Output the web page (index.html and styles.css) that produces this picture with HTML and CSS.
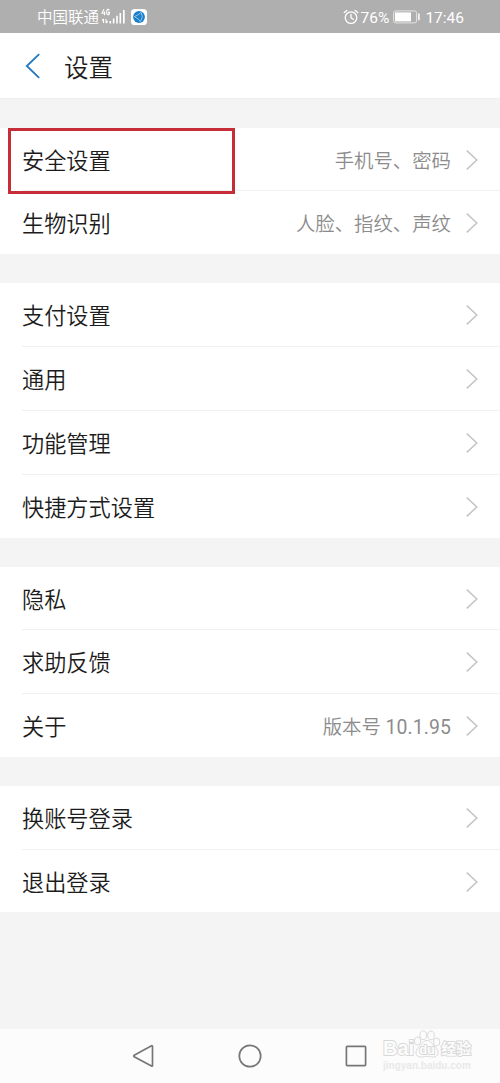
FILE: index.html
```html
<!DOCTYPE html>
<html lang="zh-CN">
<head>
    <meta charset="UTF-8">
    <meta name="viewport" content="width=device-width, initial-scale=1.0">
    <title>设置</title>
    <link rel="stylesheet" href="styles.css">
</head>
<body>
    <svg class="defs" width="0" height="0">
        <symbol id="chevron" viewBox="0 0 12 20">
            <path d="M0.8 0.6 L10.8 10 L0.8 19.4" fill="none" stroke="#c6c6c6" stroke-width="1.6"/>
        </symbol>
    </svg>

    <!-- 状态栏 -->
    <div class="status-bar">
        <span class="carrier">中国联通</span>
        <svg class="signal" width="26" height="18" viewBox="0 0 26 18">
            <g fill="none" stroke="#fff" stroke-width="1.1">
                <path d="M3 1.2 L1 5.2 H4.4 M3.5 3.4 V7.2"/>
                <path d="M8.4 2.4 Q8 1.4 7 1.4 Q5.7 1.4 5.7 4 Q5.7 6.7 7 6.7 Q8.5 6.7 8.5 4.4 H7"/>
                <path d="M2.5 11 V15 M1 12.5 L2.5 10.8 M5 11 V15 M5 15 L6.8 13.2"/>
            </g>
            <path d="M8.5 13h1.6v2.4H8.5zM11.8 10.5h1.6v4.9h-1.6zM15.2 7.8h1.6v7.6h-1.6zM18.5 5h1.6v10.4h-1.6zM22 2h1.7v13.4H22z" fill="#fff"/>
        </svg>
        <svg class="app-badge" width="16" height="16" viewBox="0 0 16 16">
            <rect width="16" height="16" rx="3.6" fill="#fff"/>
            <circle cx="8" cy="8" r="5.9" fill="#1c7fc8"/>
            <path d="M3 7.8 Q7 6.4 10.5 3.2 M4 8 Q7.5 9.4 9.7 13 M10.3 4 Q12.6 7.6 9.8 12" fill="none" stroke="#a8d8f5" stroke-width="0.8"/>
        </svg>
        <div class="status-right">
            <svg class="alarm" width="16" height="16" viewBox="0 0 16 16">
                <g fill="none" stroke="#fff" stroke-width="1.3" stroke-linecap="round">
                    <circle cx="8" cy="8.6" r="5.8"/>
                    <path d="M8 5.4 V8.8 L10.3 10.3 M1.2 3.6 L3.9 1.4 M14.8 3.6 L12.1 1.4"/>
                </g>
            </svg>
            <span class="percent">76%</span>
            <svg class="battery" width="28" height="14" viewBox="0 0 28 14">
                <rect x="0.6" y="0.9" width="23" height="12" rx="2" fill="none" stroke="#e4e4e4" stroke-width="1"/>
                <rect x="2" y="2.4" width="16" height="9" fill="#fff"/>
                <path d="M25.9 3.5 V10.3" stroke="#fff" stroke-width="1.5"/>
            </svg>
            <span class="time">17:46</span>
        </div>
    </div>

    <!-- 标题 -->
    <header class="header">
        <svg class="back" width="16" height="26" viewBox="0 0 16 26">
            <path d="M14.2 1.2 L1.8 13 L14.2 24.8" fill="none" stroke="#2277bf" stroke-width="1.8"/>
        </svg>
        <h1>设置</h1>
    </header>

    <!-- 设置列表 -->
    <main class="settings">
        <section class="group short">
            <div class="row selected">
                <span class="label">安全设置</span>
                <span class="value">手机号、密码</span>
                <svg class="arrow"><use href="#chevron"/></svg>
            </div>
            <div class="row">
                <span class="label">生物识别</span>
                <span class="value">人脸、指纹、声纹</span>
                <svg class="arrow"><use href="#chevron"/></svg>
            </div>
        </section>

        <section class="group">
            <div class="row">
                <span class="label">支付设置</span>
                <svg class="arrow"><use href="#chevron"/></svg>
            </div>
            <div class="row">
                <span class="label">通用</span>
                <svg class="arrow"><use href="#chevron"/></svg>
            </div>
            <div class="row">
                <span class="label">功能管理</span>
                <svg class="arrow"><use href="#chevron"/></svg>
            </div>
            <div class="row">
                <span class="label">快捷方式设置</span>
                <svg class="arrow"><use href="#chevron"/></svg>
            </div>
        </section>

        <section class="group short">
            <div class="row">
                <span class="label">隐私</span>
                <svg class="arrow"><use href="#chevron"/></svg>
            </div>
            <div class="row">
                <span class="label">求助反馈</span>
                <svg class="arrow"><use href="#chevron"/></svg>
            </div>
            <div class="row">
                <span class="label">关于</span>
                <span class="value">版本号 <span class="version">10.1.95</span></span>
                <svg class="arrow"><use href="#chevron"/></svg>
            </div>
        </section>

        <section class="group">
            <div class="row">
                <span class="label">换账号登录</span>
                <svg class="arrow"><use href="#chevron"/></svg>
            </div>
            <div class="row last">
                <span class="label">退出登录</span>
                <svg class="arrow"><use href="#chevron"/></svg>
            </div>
        </section>
    </main>

    <!-- 导航键 -->
    <nav class="nav-bar">
        <svg width="24" height="24" viewBox="0 0 24 24"><path d="M19.5 1.8 Q20.5 1.4 20.5 2.6 V21.4 Q20.5 22.6 19.5 22.1 L2.2 12.7 Q1.2 12 2.2 11.3 Z"/></svg>
        <svg width="24" height="24" viewBox="0 0 24 24"><circle cx="12" cy="12" r="10.7"/></svg>
        <svg width="24" height="24" viewBox="0 0 24 24"><rect x="2.4" y="2.4" width="19.2" height="19.2" rx="0.8"/></svg>
        <div class="watermark">
            <div class="brand">
                <span class="bai">Bai</span>
                <span class="paw">
                    <svg width="28" height="28" viewBox="0 0 28 28">
                        <ellipse cx="4.6" cy="11" rx="3.2" ry="4"/>
                        <ellipse cx="10.2" cy="5.2" rx="3.3" ry="4.4"/>
                        <ellipse cx="18" cy="5.4" rx="3.3" ry="4.4"/>
                        <ellipse cx="23.6" cy="12" rx="3.2" ry="4"/>
                        <path d="M14 10.5 C18 10.5 18.5 14 22 16.8 C27 21 25.5 27 20.5 27 C17 27 16 26.3 14 26.3 C12 26.3 11 27 7.5 27 C2.5 27 1 21 6 16.8 C9.5 14 10 10.5 14 10.5 Z"/>
                    </svg>
                    <b>du</b>
                </span>
                <span class="jy">经验</span>
            </div>
            <div class="site">jingyan.baidu.com</div>
        </div>
    </nav>
</body>
</html>
```
FILE: styles.css
```css
* {
    box-sizing: border-box;
}

body {
    margin: 0;
    width: 500px;
    height: 1083px;
    display: flex;
    flex-direction: column;
    overflow: hidden;
    background: #f4f4f4;
    color: #1c1c1c;
    font-family: Roboto, "Noto Sans CJK SC", sans-serif;
    font-weight: 350;
}

.defs {
    position: absolute;
}

.status-bar {
    display: flex;
    align-items: center;
    height: 33px;
    padding: 1px 36px 0 37px;
    background: #afafaf;
    color: #fff;
    font-size: 15.5px;
    line-height: 32px;
}

.carrier {
    padding-top: 2px;
}

.signal {
    margin: 0 4px 0 2px;
}

.status-right {
    display: flex;
    align-items: center;
    margin-left: auto;
}

.percent {
    margin-left: 2px;
}

.percent,
.time {
    padding-top: 1px;
    font-weight: 400;
}

.battery {
    margin: 0 4px;
}

.header {
    display: flex;
    align-items: center;
    height: 66px;
    padding-left: 25px;
    background: #fff;
    border-bottom: 1px solid #eee;
}

.header h1 {
    margin: 7px 0 0 23px;
    font-size: 24.5px;
    font-weight: 350;
    line-height: 36px;
}

.settings {
    flex: 1;
}

.group {
    margin-top: 29px;
    padding-left: 22px;
    background: #fff;
}

.row {
    display: flex;
    align-items: center;
    height: 64px;
    padding-right: 22px;
    border-top: 1px solid #f1f1f1;
}

.row:first-child {
    height: 63px;
    border-top: none;
}

.short .row:first-child {
    height: 62px;
    padding-top: 1px;
}

.row.last {
    height: 63px;
    padding-top: 1px;
}

.label {
    padding-top: 3px;
    font-size: 22.2px;
    line-height: 32px;
}

.value {
    margin-left: auto;
    padding-top: 4px;
    color: #8c8c8c;
    font-size: 19.4px;
    line-height: 28px;
}

.version {
    font-weight: 400;
    letter-spacing: 0.1px;
}

.arrow {
    width: 12px;
    height: 20px;
    margin-left: auto;
}

.value + .arrow {
    margin-left: 15px;
}

/* 红框盖在分隔线上 */
.selected {
    position: relative;
}

.selected::after {
    content: "";
    position: absolute;
    left: -14px;
    top: 0;
    box-sizing: border-box;
    width: 227px;
    height: 66px;
    border: 3px solid #c62d38;
}

.nav-bar {
    position: relative;
    display: flex;
    align-items: center;
    gap: 82px;
    height: 54px;
    padding-left: 132px;
    background: #fcfcfc;
}

.nav-bar > svg {
    fill: none;
    stroke: #777;
    stroke-width: 1.7;
}

.watermark {
    position: absolute;
    left: 383px;
    top: 0;
    color: #fcfcfc;
}

.brand {
    display: flex;
    align-items: flex-end;
    height: 29px;
    -webkit-text-stroke: 1.8px #d8d8d8;
    paint-order: stroke fill;
}

.bai {
    font: 700 20px/20px "Liberation Sans", sans-serif;
}

.paw {
    position: relative;
    width: 28px;
    height: 28px;
    margin-left: -1px;
}

.paw svg {
    display: block;
    fill: #fcfcfc;
    stroke: #dadada;
    stroke-width: 1;
    paint-order: normal;
}

.paw b {
    position: absolute;
    left: 6px;
    top: 13px;
    font: 700 13px/13px "Liberation Sans", sans-serif;
}

.jy {
    font-size: 15px;
    font-weight: 700;
    line-height: 18px;
}

.site {
    padding-top: 1px;
    color: #e9e9e9;
    font: 700 10px/13px "Liberation Sans", sans-serif;
}
```
